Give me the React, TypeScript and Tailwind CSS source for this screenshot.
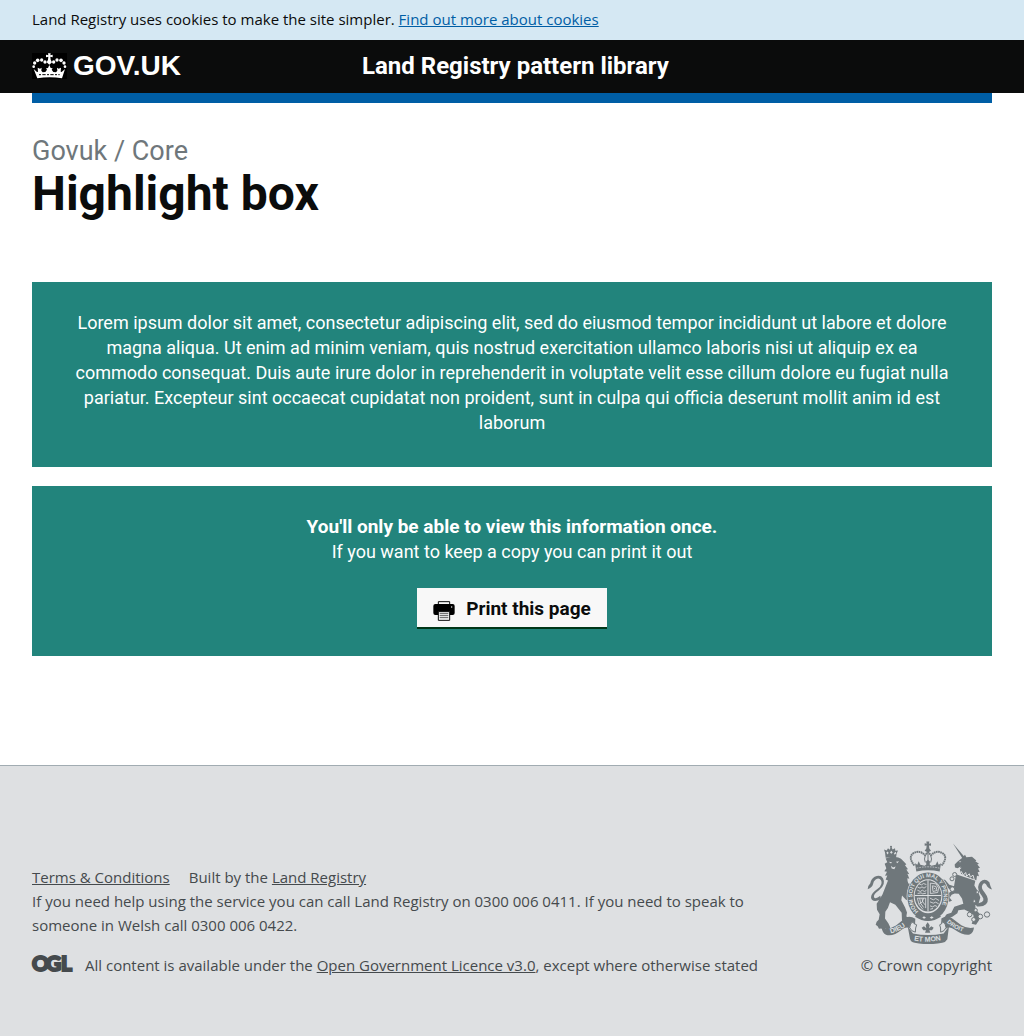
import type { ReactNode } from "react";

function Crown() {
  return (
    <svg viewBox="36 38 105 78" className="h-[26px] w-[35px] bg-black" aria-hidden="true" fill="#fff">
      <g>
        <circle cx="41" cy="79" r="4" />
        <circle cx="44" cy="68" r="5" />
        <circle cx="53" cy="60" r="5.5" />
        <circle cx="65" cy="59" r="5" />
        <circle cx="75" cy="65" r="5" />
        <circle cx="135" cy="79" r="4" />
        <circle cx="132" cy="68" r="5" />
        <circle cx="123" cy="60" r="5.5" />
        <circle cx="111" cy="59" r="5" />
        <circle cx="101" cy="65" r="5" />
      </g>
      <path d="M84 39h8l-1 6 7-2v8l-7-2 1 9 4 8-8 7-8-7 4-8 1-9-7 2v-8l7 2z" />
      <path d="M41 86l10 9 3-1-1-12 7 3 5-3-1 9 4 5 8-1 5-7-3-4 6-1 4-9 4 9 6 1-3 4 5 7 8 1 4-5-1-9 5 3 7-3-1 12 3 1 10-9-9 28c-24-4-50-4-74 0z" />
      <path d="M57 103l62 0" fill="none" stroke="#000" strokeWidth="3" strokeDasharray="6 4 10 4" />
    </svg>
  );
}

function Printer() {
  return (
    <svg viewBox="0 0 66 60" className="mt-1 h-5 w-[22px]" aria-hidden="true">
      <path d="M16 10V2h34v8" fill="#f8f8f8" stroke="#0b0c0c" strokeWidth="3" />
      <path d="M7 9h52q6 0 6 6v21q0 6-6 6H7q-6 0-6-6V15q0-6 6-6z" fill="#000" />
      <circle cx="56" cy="18" r="2" fill="#f8f8f8" />
      <path d="M16 32h34v26H16z" fill="#f8f8f8" stroke="#0b0c0c" strokeWidth="3" />
      <path d="M20 38h26M20 44h26M20 50h26" stroke="#0b0c0c" strokeWidth="2" />
    </svg>
  );
}

function RoyalArms() {
  return (
    <svg viewBox="36 32 375 308" className="h-[103px] w-[125px]" role="img" aria-label="Royal coat of arms" fill="#6f777b">
      <defs>
        <path id="garter" d="M191 243a47 57 0 1 1 58-2" />
        <path id="mottoLeft" d="M107 309q30-7 52-29" />
        <path id="mottoMid" d="M177 330q44 8 88-3" />
        <path id="mottoRight" d="M275 276q24 23 62 31" />
      </defs>

      {/* Lion */}
      <path d="M90 66l-3-9 8 3 4-7 5 5 4-10 5 9 7-4 1 8 8-1-4 9-2 13q-16-4-31 0z" />
      <path d="M94 67l3-4 4 4-3 5zM105 66l4-5 4 5-4 4zM117 68l5-4 2 4-5 5z" fill="#dee0e2" />
      <circle cx="108" cy="49" r="3" />
      <path d="M92 84q16-9 38-3 9 3 14 10l10 10-4 3 9 12-5 1 9 14-6-1 6 15-6-2q0 10 3 16l12 2-4 24-11-5 10 22 8 4-6 8-16-6-12-13-2 14 11 21 6 16-2 12 14 7 8 9-6 4-20-1-9-7-1-23-19-24-16-8q-5 18-14 29l-1 20 10 14 6 13-8 6-7-3-5 5-7-5-7 1-4-8-6-4 3-9 6-6 3-17-8-13-1-18 17-27 17-43-7-3 5-12-7 1 6-12-8-2 6-9-5-13 8-5z" />
      <path d="M101 94l10 1-3 4zM123 94l9-2-5 6zM108 106l6 5 8-3-4 8-8-2z" fill="#dee0e2" />
      <path d="M78 207q-28 11-30-7 0-11 20-25 17-14 10-26-6-9-16-2-7 5-8 14-2 9-16 15 1-12 8-18 2-12 13-19 17-8 25 4 10 18-12 36-18 12-15 21 4 8 19-4z" />

      {/* Unicorn */}
      <path d="M294 39l36 42-6 5z" />
      <path d="M322 82l8-9 4 7 17-1 13 11-3 2 11 8-5 2 8 10-6 2 5 10-6 1 4 12-6-1-2 13q-25-8-46-19l-4-15 3-7-9 5-8-2-1-9 8-8z" />
      <path d="M312 93l7-1-4 4zM307 114l13-2-8 7z" fill="#dee0e2" />
      <path d="M303 131l58 20-3 14 11 18 7 18-5 17-10 6 1 13 16 17-6 15-9 14-13-3 6-15-1-12-15-10-12-6-18 2-3 9-15 11-8 2-15-2 6-8 14-4 9-18 27-9-4-16-10-14-12-1-9 4-6 9 7 9-8 3-9-10 6-15 10-8-16-12-6-12-8 3-5-5 6-8 9 1 13 15 14 4z" />
      <path d="M304 124l12 6 3-7 6 11 7-8 3 11 8-7 3 10 8-6 4 14" fill="none" stroke="#dee0e2" strokeWidth="3" />
      <path d="M360 220q29-3 25-16-3-7-10-16-12-19 1-34 13-13 27 1 3 13 8 22-14-4-17-14-5-9-11-1-7 10 6 24 17 22 4 35-9 9-27 7z" />
      <g fill="#dee0e2" stroke="#6f777b" strokeWidth="3">
        <circle cx="299" cy="132" r="6" />
        <circle cx="291" cy="145" r="6" />
        <circle cx="292" cy="176" r="7" />
        <circle cx="367" cy="185" r="4" />
        <circle cx="358" cy="212" r="4" />
        <circle cx="362" cy="239" r="5" />
        <circle cx="344" cy="252" r="7" />
        <circle cx="356" cy="267" r="6" />
        <circle cx="376" cy="258" r="7" />
        <circle cx="396" cy="252" r="8" />
      </g>

      {/* Crown */}
      <path d="M214 33h9l-1 7 6-2v8l-6-1 1 9 5 7-9 5-10-5 5-7 1-9-6 1v-8l6 2z" />
      <path d="M178 105q-19-24-4-36 19-12 36 5l9-9 9 9q17-17 36-5 15 12-4 36" fill="none" stroke="#6f777b" strokeWidth="6" strokeDasharray="5 1.5" />
      <path d="M219 65v30M211 74q-5 12 0 22M227 74q5 12 0 22" fill="none" stroke="#6f777b" strokeWidth="3" />
      <path d="M180 98l7 5 4-11 5 11 13 3 5-4-1-9 6-5 6 5-1 9 5 4 13-3 5-11 4 11 7-5-4 25q-34-8-70 0z" />
      <path d="M185 113q34-8 69 0" fill="none" stroke="#dee0e2" strokeWidth="2" strokeDasharray="5 3" />

      {/* Garter and shield */}
      <ellipse cx="219" cy="198" rx="64" ry="74" fill="#dee0e2" />
      <ellipse cx="219" cy="198" rx="62" ry="72" />
      <ellipse cx="219" cy="197" rx="43" ry="51" fill="#dee0e2" />
      <text fontFamily="Liberation Sans" fontWeight="700" fontSize="17" fill="#dee0e2">
        <textPath href="#garter">HONI SOIT QUI MAL Y PENSE</textPath>
      </text>
      <ellipse cx="219" cy="196" rx="40" ry="47" />
      <path d="M219 149v94M179 195h80" stroke="#dee0e2" strokeWidth="3" />
      <g fill="none" stroke="#dee0e2" strokeWidth="2.5">
        <path d="M187 169l8 4 6-4 6 4 7-5M187 179l9 4 6-4 6 4 6-3M192 160l8 3 5-4 9 3M188 189l10-2 5 3 10-2" />
        <path d="M225 203l10 5 7-4 10 6M225 214l10 4 7-3 9 5M225 226l8 3 7-4 6 3M226 236l8-2" />
        <path d="M226 158l17 2 8 13-3 13-22 3zM232 166l11 2 3 12-12 3zM236 172l5 4" />
        <path d="M187 203q1 20 17 34M194 203q0 17 12 28M201 203q0 12 9 20M187 203h25v30M206 203q-2 15-14 18" />
      </g>
      <path d="M187 251q32 17 64 0l7 8q-39 25-78 0z" />
      <path d="M202 261l5-4 6 5-6 3zM224 262l6-5 6 4-6 4z" fill="#dee0e2" />

      {/* Motto scroll */}
      <path d="M80 291q21 8 43-6l29-23q13-7 29 3l-1 17q-8 4-13 12-13-7-25 2-29 24-49 17-11-5-13-22z" />
      <path d="M357 291q-18 5-38-7l-31-23q-14-8-29 3l0 18q10 2 14 13 10-8 24 1 29 20 47 16 11-4 13-21z" />
      <path d="M174 309q45 9 92 0l16-22-5 39q-5 9-15 11-43 8-83 0-12-2-14-12l-7-38z" />
      <path d="M164 291q0-14 12-18-3 7 9 10-4 8-4 22-13-2-17-14zM273 291q0-14-12-18 3 7-7 10 4 8 3 22 12-2 16-14z" fill="#dee0e2" stroke="#6f777b" strokeWidth="3" />
      <g fontFamily="Liberation Sans" fontWeight="700" fontSize="21" fill="#dee0e2">
        <text><textPath href="#mottoLeft">DIEU</textPath></text>
        <text><textPath href="#mottoMid">ET MON</textPath></text>
        <text fontSize="18"><textPath href="#mottoRight">DROIT</textPath></text>
      </g>
      <path d="M218 275l6 9-2 9 7-6 7 5-5 7h-8l3 8h-16l3-8h-8l-5-7 7-5 7 6-2-9z" />
    </svg>
  );
}

function Ogl() {
  return (
    <svg viewBox="0 0 41 24" className="h-6 w-[41px] shrink-0 overflow-visible" role="img" aria-label="Open Government Licence" fill="#454a4d">
      <text y="18" x="0 14 29" fontFamily="Lato" fontWeight="900" fontSize="21" stroke="#454a4d" strokeWidth="2">
        OGL
      </text>
    </svg>
  );
}

function HighlightBox({ children }: { children: ReactNode }) {
  return <section className="bg-[#22847c] px-8 pt-7 text-center text-[18px] leading-[25px] text-white">{children}</section>;
}

export default function App() {
  return (
    <div className="bg-white font-[Roboto,sans-serif] text-[#0b0c0c]">
      <div className="bg-[#d5e8f3] px-8 pt-[7px] pb-[9px] font-['Open_Sans',sans-serif] text-[15px] leading-6">
        <p>
          Land Registry uses cookies to make the site simpler.{" "}
          <a href="#cookies" className="text-[#005ea5] underline">Find out more about cookies</a>
        </p>
      </div>
      <header className="bg-[#0b0c0c] text-white">
        <div className="grid grid-cols-[330px_1fr] items-start px-8 pt-[10px] pb-[11px]">
          <a href="#home" className="flex items-center gap-1.5 font-['Liberation_Sans',sans-serif] text-[28px] leading-8 font-bold">
            <Crown />
            GOV.UK
          </a>
          <a href="#library" className="text-[24px] leading-8 font-bold">Land Registry pattern library</a>
        </div>
      </header>
      <div className="mx-8 h-2.5 bg-[#005ea5]" />

      <main className="px-8 pb-[109px]">
        <h1 className="pt-[31px] pb-[63px] text-[48px] leading-[50px] font-bold">
          <span className="block text-[27px] leading-[35px] font-normal text-[#6f777b]">Govuk / Core</span>
          Highlight box
        </h1>
        <div className="flex flex-col gap-[19px]">
          <HighlightBox>
            <p className="px-2 pb-8">
              Lorem ipsum dolor sit amet, consectetur adipiscing elit, sed do eiusmod tempor incididunt ut labore et dolore
              magna aliqua. Ut enim ad minim veniam, quis nostrud exercitation ullamco laboris nisi ut aliquip ex ea
              commodo consequat. Duis aute irure dolor in reprehenderit in voluptate velit esse cillum dolore eu fugiat nulla
              pariatur. Excepteur sint occaecat cupidatat non proident, sunt in culpa qui officia deserunt mollit anim id est
              laborum
            </p>
          </HighlightBox>
          <HighlightBox>
            <p>
              <strong className="text-[19px] font-bold">You'll only be able to view this information once.</strong>
              <br />
              If you want to keep a copy you can print it out
            </p>
            <div className="flex justify-center pt-6 pb-[27px]">
              <button type="button" className="flex h-[41px] items-center gap-[11px] border-b-2 border-[#003618] bg-[#f8f8f8] px-4 pt-0.5 text-[19px] font-bold text-[#0b0c0c]">
                <Printer />
                Print this page
              </button>
            </div>
          </HighlightBox>
        </div>
      </main>

      <footer className="flex items-end justify-between border-t border-[#a1acb2] bg-[#dee0e2] px-8 pt-[75px] pb-[59px] font-['Open_Sans',sans-serif] text-[15px] leading-6 text-[#454a4d]">
        <div className="max-w-[740px]">
          <p>
            <a href="#terms" className="mr-[19px] underline">Terms &amp; Conditions</a>
            Built by the <a href="#registry" className="underline">Land Registry</a>
          </p>
          <p>
            If you need help using the service you can call Land Registry on 0300 006 0411. If you need to speak to
            someone in Welsh call 0300 006 0422.
          </p>
          <div className="flex items-center gap-3 pt-4">
            <Ogl />
            <p>
              All content is available under the <a href="#ogl" className="underline">Open Government Licence v3.0</a>, except where otherwise stated
            </p>
          </div>
        </div>
        <a href="#copyright" className="flex flex-col items-end gap-[9px]">
          <RoyalArms />
          © Crown copyright
        </a>
      </footer>
    </div>
  );
}
